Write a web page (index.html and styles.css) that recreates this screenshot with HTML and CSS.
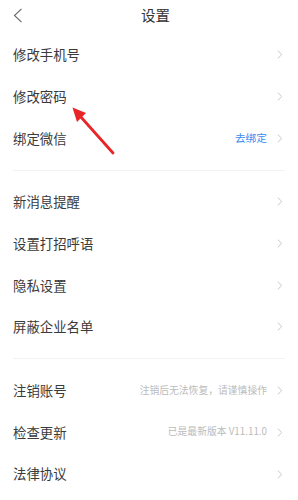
FILE: index.html
```html
<!DOCTYPE html>
<html lang="zh-CN">
<head>
<meta charset="utf-8">
<link rel="stylesheet" href="styles.css">
</head>
<body>
<div class="page">
  <header class="topbar">
    <span class="back">
      <svg width="10" height="15" viewBox="0 0 10 15"><path d="M8.5 0.8 L1.5 7.5 L8.5 14.2" fill="none" stroke="#666" stroke-width="1.1"/></svg>
    </span>
    <h1 class="title">设置</h1>
    <span></span>
  </header>

  <section class="group">
    <div class="row"><span class="label">修改手机号</span><span class="right"><svg class="chev" width="6" height="9" viewBox="0 0 6 9"><path d="M0.8 0.6 L4.8 4.5 L0.8 8.4" fill="none" stroke="#c8c8c8" stroke-width="1"/></svg></span></div>
    <div class="row"><span class="label">修改密码</span><span class="right"><svg class="chev" width="6" height="9" viewBox="0 0 6 9"><path d="M0.8 0.6 L4.8 4.5 L0.8 8.4" fill="none" stroke="#c8c8c8" stroke-width="1"/></svg></span></div>
    <div class="row"><span class="label">绑定微信</span><span class="right"><span class="link">去绑定</span><svg class="chev" width="6" height="9" viewBox="0 0 6 9"><path d="M0.8 0.6 L4.8 4.5 L0.8 8.4" fill="none" stroke="#c8c8c8" stroke-width="1"/></svg></span></div>
  </section>
  <div class="divider"></div>
  <section class="group">
    <div class="row"><span class="label">新消息提醒</span><span class="right"><svg class="chev" width="6" height="9" viewBox="0 0 6 9"><path d="M0.8 0.6 L4.8 4.5 L0.8 8.4" fill="none" stroke="#c8c8c8" stroke-width="1"/></svg></span></div>
    <div class="row"><span class="label">设置打招呼语</span><span class="right"><svg class="chev" width="6" height="9" viewBox="0 0 6 9"><path d="M0.8 0.6 L4.8 4.5 L0.8 8.4" fill="none" stroke="#c8c8c8" stroke-width="1"/></svg></span></div>
    <div class="row"><span class="label">隐私设置</span><span class="right"><svg class="chev" width="6" height="9" viewBox="0 0 6 9"><path d="M0.8 0.6 L4.8 4.5 L0.8 8.4" fill="none" stroke="#c8c8c8" stroke-width="1"/></svg></span></div>
    <div class="row"><span class="label">屏蔽企业名单</span><span class="right"><svg class="chev" width="6" height="9" viewBox="0 0 6 9"><path d="M0.8 0.6 L4.8 4.5 L0.8 8.4" fill="none" stroke="#c8c8c8" stroke-width="1"/></svg></span></div>
  </section>
  <div class="divider"></div>
  <section class="group">
    <div class="row"><span class="label">注销账号</span><span class="right"><span class="hint">注销后无法恢复，请谨慎操作</span><svg class="chev" width="6" height="9" viewBox="0 0 6 9"><path d="M0.8 0.6 L4.8 4.5 L0.8 8.4" fill="none" stroke="#c8c8c8" stroke-width="1"/></svg></span></div>
    <div class="row"><span class="label">检查更新</span><span class="right"><span class="hint">已是最新版本 V11.11.0</span><svg class="chev" width="6" height="9" viewBox="0 0 6 9"><path d="M0.8 0.6 L4.8 4.5 L0.8 8.4" fill="none" stroke="#c8c8c8" stroke-width="1"/></svg></span></div>
    <div class="row"><span class="label">法律协议</span><span class="right"><svg class="chev" width="6" height="9" viewBox="0 0 6 9"><path d="M0.8 0.6 L4.8 4.5 L0.8 8.4" fill="none" stroke="#c8c8c8" stroke-width="1"/></svg></span></div>
  </section>

  <svg class="arrow" width="298" height="500" viewBox="0 0 298 500">
    <line x1="113" y1="153" x2="80" y2="116" stroke="#e8262a" stroke-width="2.8" stroke-linecap="round"/>
    <polygon points="72.5,107.5 86,113 77,122" fill="#e8262a"/>
  </svg>
</div>
</body>
</html>
```

FILE: styles.css
```css
* { box-sizing: border-box; }
html, body { margin: 0; padding: 0; background: #fff; }
body {
  font-family: "Noto Sans CJK SC", "Noto Sans", sans-serif;
  color: #333;
  width: 298px;
  height: 500px;
  overflow: hidden;
}
.page { position: relative; width: 298px; height: 500px; }
.topbar {
  height: 34px;
  display: grid;
  grid-template-columns: 1fr auto 1fr;
  align-items: center;
  padding: 0 0 3px 13px;
}
.back { display: flex; align-items: center; height: 15px; }
.title {
  margin: 0;
  font-size: 14.5px;
  font-weight: 400;
  color: #333;
  line-height: 1;
}
.group { display: flex; flex-direction: column; }
.row {
  height: 41.7px;
  display: flex;
  align-items: center;
  justify-content: space-between;
  padding: 0 15px 0 13px;
}
.label { font-size: 13.4px; line-height: 1; color: #3a3a3a; }
.right { display: flex; align-items: center; gap: 10px; }
.link { font-size: 10.7px; color: #3a8af0; line-height: 1; }
.hint { font-size: 9.8px; color: #bbb; line-height: 1; }
.chev { display: block; }
.divider {
  height: 1px;
  background: #f2f2f2;
  margin: 10.5px 13px 10.5px 13px;
}
.arrow { position: absolute; left: 0; top: 0; pointer-events: none; }
```
